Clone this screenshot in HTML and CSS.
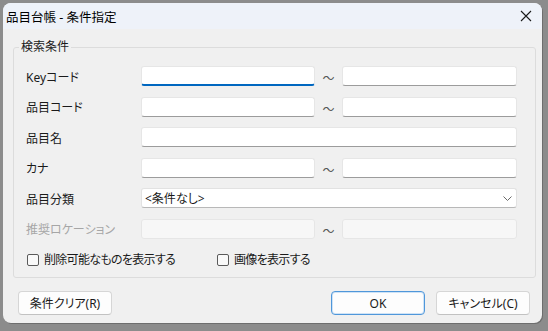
FILE: index.html
```html
<!DOCTYPE html>
<html lang="ja">
<head>
<meta charset="utf-8">
<title>品目台帳 - 条件指定</title>
<link rel="stylesheet" href="styles.css">
</head>
<body>
<div class="window">
  <div class="titlebar">
    <span class="title">品目台帳 - 条件指定</span>
    <span class="close">
      <svg width="12" height="12" viewBox="0 0 12 12"><path d="M1 1 L11 11 M11 1 L1 11" stroke="#1a1a1a" stroke-width="1.1" fill="none"/></svg>
    </span>
  </div>
  <div class="content">
    <div class="group">
      <span class="legend">検索条件</span>
      <div class="form">
        <label class="lbl">Keyコード</label>
        <div class="field focused"></div>
        <span class="tilde">～</span>
        <div class="field"></div>

        <label class="lbl">品目コード</label>
        <div class="field"></div>
        <span class="tilde">～</span>
        <div class="field"></div>

        <label class="lbl">品目名</label>
        <div class="field wide"></div>

        <label class="lbl">カナ</label>
        <div class="field"></div>
        <span class="tilde">～</span>
        <div class="field"></div>

        <label class="lbl">品目分類</label>
        <div class="select wide">
          <span>&lt;条件なし&gt;</span>
          <svg width="9" height="5" viewBox="0 0 9 5"><path d="M0.5 0.5 L4.5 4.5 L8.5 0.5" stroke="#6a6a6a" stroke-width="1" fill="none"/></svg>
        </div>

        <label class="lbl disabled">推奨ロケーション</label>
        <div class="field off"></div>
        <span class="tilde">～</span>
        <div class="field off"></div>
      </div>
      <div class="checks">
        <label class="check"><span class="box"></span>削除可能なものを表示する</label>
        <label class="check"><span class="box"></span>画像を表示する</label>
      </div>
    </div>
    <div class="buttons">
      <button class="btn">条件クリア(R)</button>
      <span class="spacer"></span>
      <button class="btn primary">OK</button>
      <button class="btn">キャンセル(C)</button>
    </div>
  </div>
</div>
</body>
</html>
```
FILE: styles.css
```css
* { box-sizing: border-box; }
html, body { margin: 0; padding: 0; }
body {
  background: #8c8c8c;
  width: 548px;
  height: 331px;
  overflow: hidden;
  font-family: "Noto Sans", "Noto Sans CJK JP", sans-serif;
  font-size: 12px;
  color: #1a1a1a;
  font-feature-settings: "palt";
}
.window {
  margin: 3px 0 0 3px;
  width: 539px;
  height: 320px;
  background: #f0f0f0;
  border-radius: 8px;
  overflow: hidden;
  box-shadow: 1px 1px 0 #6e6e6e;
}
.titlebar {
  height: 26px;
  background: #eef2f9;
  display: flex;
  align-items: center;
  justify-content: space-between;
  padding: 0 10px 0 3px;
}
.title { font-size: 12.5px; color: #000; }
.close { display: flex; width: 12px; height: 12px; }
.content { padding: 18px 6px 0 10px; }
.group {
  position: relative;
  border: 1px solid #dcdcdc;
  border-radius: 3px;
  height: 231px;
  padding: 18px 0 0 12px;
}
.legend {
  position: absolute;
  top: -8px;
  left: 5px;
  padding: 0 2px;
  background: #f0f0f0;
  line-height: 14px;
}
.form {
  display: grid;
  grid-template-columns: 115px 174px 27px 175px;
  grid-auto-rows: 20px;
  row-gap: 10.5px;
  align-items: center;
}
.lbl { line-height: 18px; padding-top: 3px; }
.lbl.disabled { color: #a6a6a6; }
.field {
  height: 20px;
  background: #fff;
  border: 1px solid #e6e6e6;
  border-bottom-color: #9c9c9c;
  border-radius: 3px;
}
.field.focused { border-bottom: 2px solid #0067c0; }
.field.wide, .select.wide { grid-column: 2 / 5; }
.field.off {
  background: #f7f7f7;
  border-color: #e6e6e6;
}
.tilde {
  text-align: center;
  font-size: 12px;
  color: #555;
  padding-top: 5px;
  line-height: 15px;
}
.select {
  height: 20px;
  background: #fff;
  border: 1px solid #e2e2e2;
  border-bottom-color: #b8b8b8;
  border-radius: 3px;
  display: flex;
  align-items: center;
  justify-content: space-between;
  padding: 0 4px 0 3px;
}
.checks {
  display: flex;
  gap: 42px;
  margin-top: 13px;
  padding-left: 1px;
}
.check {
  display: flex;
  align-items: center;
  gap: 5px;
  line-height: 16px;
  letter-spacing: -0.7px;
}
.box {
  width: 12px;
  height: 12px;
  border: 1px solid #5a5a5a;
  border-radius: 2px;
  background: #f9f9f9;
}
.buttons {
  display: flex;
  margin-top: 13px;
  padding: 0 6px 0 5px;
  gap: 11px;
}
.spacer { flex: 1; }
.btn {
  width: 94px;
  height: 24px;
  font: inherit;
  font-feature-settings: "palt";
  color: #1a1a1a;
  background: #fdfdfd;
  border: 1px solid #d6d6d6;
  border-bottom-color: #c2c2c2;
  border-radius: 4px;
  padding: 0;
}
.btn.primary {
  border: 1px solid #4f97da;
  box-shadow: inset 0 0 0 1px #cfe3f6;
}
```
